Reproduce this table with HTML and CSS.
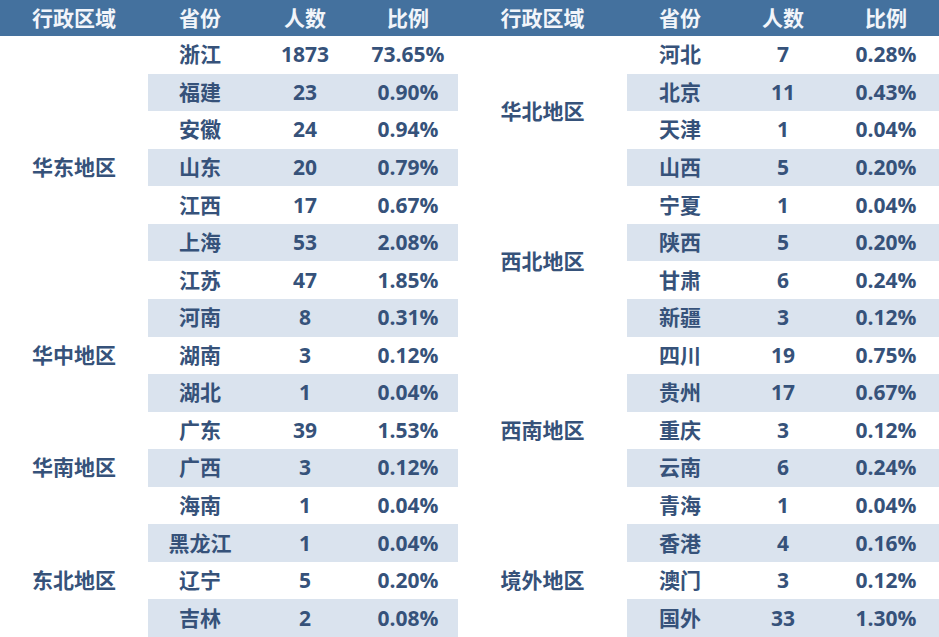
FILE: index.html
```html
<!DOCTYPE html>
<html lang="zh-CN">
<head>
<meta charset="utf-8">
<title>地区分布</title>
<link rel="stylesheet" href="styles.css">
</head>
<body>
<div class="sheet">
  <table class="stats left">
    <colgroup><col class="c-region"><col class="c-prov"><col class="c-count"><col class="c-ratio"></colgroup>
    <thead><tr><th>行政区域</th><th>省份</th><th>人数</th><th>比例</th></tr></thead>
    <tbody>
      <tr><td class="region" rowspan="7">华东地区</td><td>浙江</td><td>1873</td><td>73.65%</td></tr>
      <tr><td>福建</td><td>23</td><td>0.90%</td></tr>
      <tr><td>安徽</td><td>24</td><td>0.94%</td></tr>
      <tr><td>山东</td><td>20</td><td>0.79%</td></tr>
      <tr><td>江西</td><td>17</td><td>0.67%</td></tr>
      <tr><td>上海</td><td>53</td><td>2.08%</td></tr>
      <tr><td>江苏</td><td>47</td><td>1.85%</td></tr>
      <tr><td class="region" rowspan="3">华中地区</td><td>河南</td><td>8</td><td>0.31%</td></tr>
      <tr><td>湖南</td><td>3</td><td>0.12%</td></tr>
      <tr><td>湖北</td><td>1</td><td>0.04%</td></tr>
      <tr><td class="region" rowspan="3">华南地区</td><td>广东</td><td>39</td><td>1.53%</td></tr>
      <tr><td>广西</td><td>3</td><td>0.12%</td></tr>
      <tr><td>海南</td><td>1</td><td>0.04%</td></tr>
      <tr><td class="region" rowspan="3">东北地区</td><td>黑龙江</td><td>1</td><td>0.04%</td></tr>
      <tr><td>辽宁</td><td>5</td><td>0.20%</td></tr>
      <tr><td>吉林</td><td>2</td><td>0.08%</td></tr>
    </tbody>
  </table>
  <table class="stats right">
    <colgroup><col class="c-region-r"><col class="c-prov-r"><col class="c-count-r"><col class="c-ratio-r"></colgroup>
    <thead><tr><th>行政区域</th><th>省份</th><th>人数</th><th>比例</th></tr></thead>
    <tbody>
      <tr><td class="region" rowspan="4">华北地区</td><td>河北</td><td>7</td><td>0.28%</td></tr>
      <tr><td>北京</td><td>11</td><td>0.43%</td></tr>
      <tr><td>天津</td><td>1</td><td>0.04%</td></tr>
      <tr><td>山西</td><td>5</td><td>0.20%</td></tr>
      <tr><td class="region" rowspan="4">西北地区</td><td>宁夏</td><td>1</td><td>0.04%</td></tr>
      <tr><td>陕西</td><td>5</td><td>0.20%</td></tr>
      <tr><td>甘肃</td><td>6</td><td>0.24%</td></tr>
      <tr><td>新疆</td><td>3</td><td>0.12%</td></tr>
      <tr><td class="region" rowspan="5">西南地区</td><td>四川</td><td>19</td><td>0.75%</td></tr>
      <tr><td>贵州</td><td>17</td><td>0.67%</td></tr>
      <tr><td>重庆</td><td>3</td><td>0.12%</td></tr>
      <tr><td>云南</td><td>6</td><td>0.24%</td></tr>
      <tr><td>青海</td><td>1</td><td>0.04%</td></tr>
      <tr><td class="region" rowspan="3">境外地区</td><td>香港</td><td>4</td><td>0.16%</td></tr>
      <tr><td>澳门</td><td>3</td><td>0.12%</td></tr>
      <tr><td>国外</td><td>33</td><td>1.30%</td></tr>
    </tbody>
  </table>
</div>
</body>
</html>
```

FILE: styles.css
```css
html, body {
  margin: 0;
  padding: 0;
  background: #ffffff;
}

.sheet {
  display: flex;
  width: 939px;
  height: 637px;
  overflow: hidden;
  font-family: "Open Sans", "Noto Sans CJK SC", sans-serif;
  font-weight: 700;
  font-size: 21px;
  color: #36527a;
}

.stats {
  border-collapse: collapse;
  border-spacing: 0;
  table-layout: fixed;
}

.stats.left { width: 458px; }
.stats.right { width: 481px; }

.c-region { width: 148px; }
.c-prov { width: 104px; }
.c-count { width: 106px; }
.c-ratio { width: 100px; }

.c-region-r { width: 169px; }
.c-prov-r { width: 106px; }
.c-count-r { width: 100px; }
.c-ratio-r { width: 106px; }

.stats th {
  height: 36px;
  padding: 0;
  background: #44719e;
  color: #f2f5fa;
  font-weight: 700;
  text-align: center;
  vertical-align: middle;
  line-height: 1;
}

.stats td {
  height: 37.5px;
  padding: 0;
  text-align: center;
  vertical-align: middle;
  line-height: 1;
  white-space: nowrap;
}

.stats tbody tr:nth-child(even) td:not(.region) {
  background: #dae3ee;
}

.stats td.region {
  background: #ffffff;
}
```
